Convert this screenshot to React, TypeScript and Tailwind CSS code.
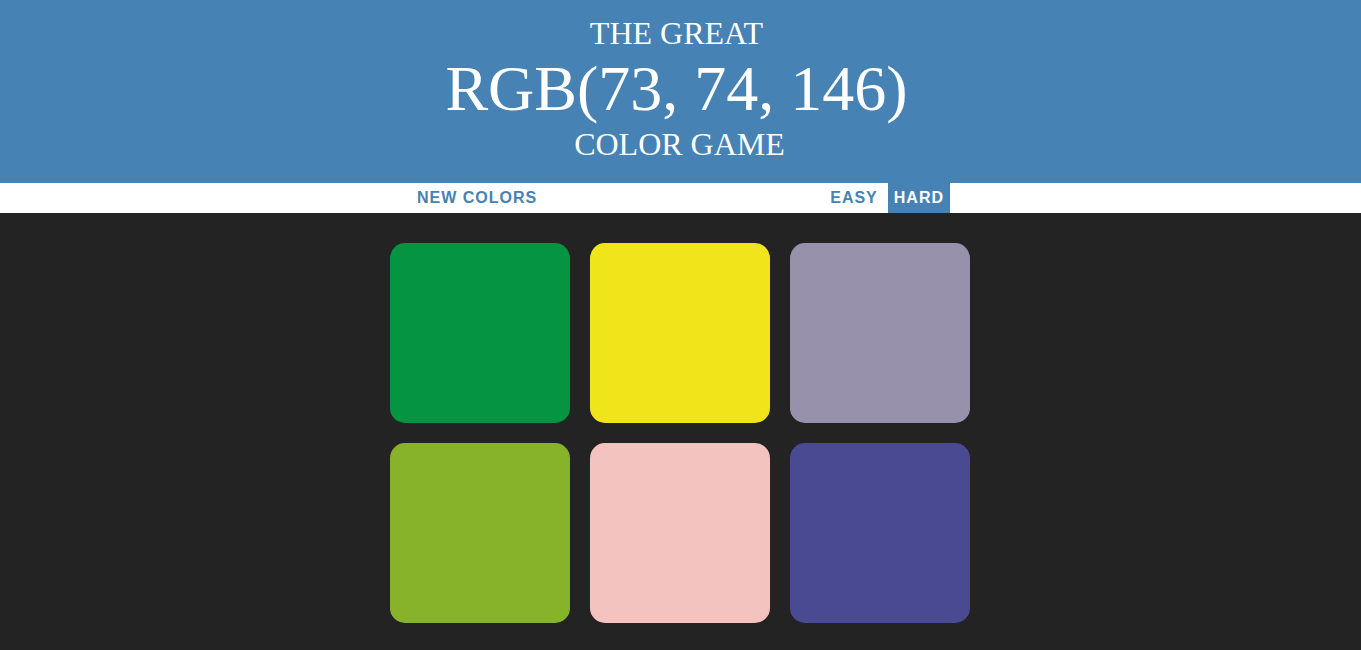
const squares = [
  "bg-[#059441]",
  "bg-[#f0e51a]",
  "bg-[#9891ab]",
  "bg-[#86b32a]",
  "bg-[#f2c3bf]",
  "bg-[#4a4a92]",
];

const App = () => {
  return (
    <div className="min-h-screen w-full bg-[#232323]">
      <h1 className="bg-[#4682b4] pt-[15px] pb-[21px] text-center font-['Liberation_Serif',serif] font-normal uppercase text-white">
        <div className="pr-2 text-[32px] leading-[36px]">The Great</div>
        <div className="pr-2 text-[64px] leading-[75px]">RGB(73, 74, 146)</div>
        <div className="pr-[2px] text-[32px] leading-[36px]">Color Game</div>
      </h1>

      <div className="flex h-[30px] justify-center bg-white font-['Liberation_Sans',Arial,sans-serif] text-[16px] font-bold uppercase tracking-[1px]">
        <button className="h-full px-1.5 uppercase text-[#4682b4]">
          New Colors
        </button>
        <span className="w-[281px]"></span>
        <button className="h-full px-1.5 uppercase text-[#4682b4]">Easy</button>
        <button className="ml-1 h-full bg-[#4682b4] px-1.5 uppercase text-white">
          Hard
        </button>
      </div>

      <div className="mx-auto mt-5 flex w-[601px] flex-wrap">
        {squares.map((c, i) => (
          <div key={i} className={`m-[10px] h-[180px] w-[180px] rounded-[15px] ${c}`} />
        ))}
      </div>
    </div>
  );
};

export default App;
